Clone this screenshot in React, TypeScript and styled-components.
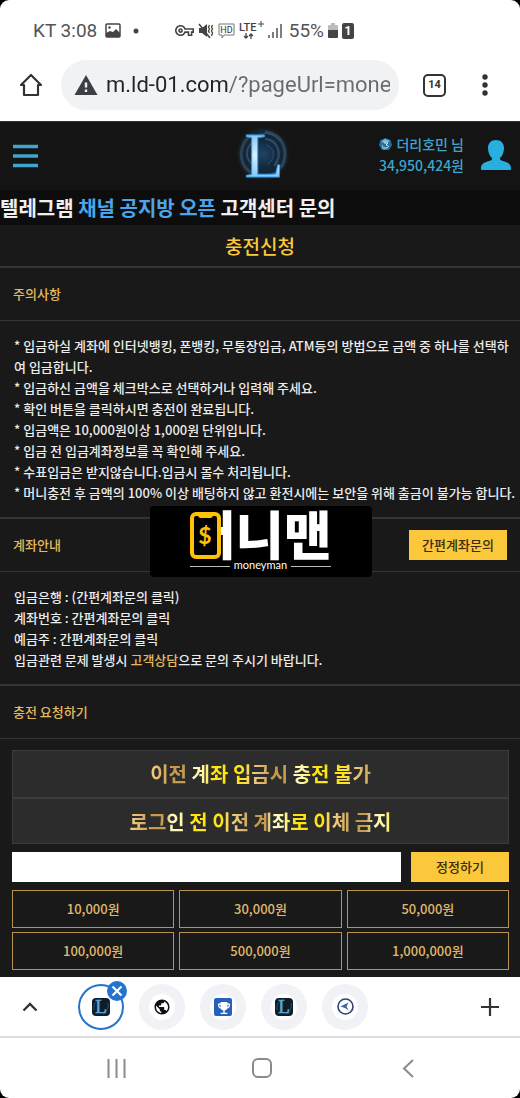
import React from "react";
import styled, { createGlobalStyle } from "styled-components";
import { MdPublic, MdOutlineVpnKey, MdEmojiEvents } from "react-icons/md";

const gold = "#e6b95e";
const yellow = "#fbc83c";
const cyan = "#3fa5cf";
const line = "#343434";
const korean = `"Noto Sans CJK KR", "Noto Sans", sans-serif`;

const GlobalStyle = createGlobalStyle`
  * { box-sizing: border-box; }
  html { background: #000; }
  body { margin: 0; background: #000; font-family: ${korean}; }
  button, input { font: inherit; color: inherit; margin: 0; padding: 0; border: 0; border-radius: 0; background: none; }
  button { cursor: pointer; }
  svg { display: block; flex: none; overflow: visible; }
`;

const Screen = styled.div`
  background: #fff;
  border-radius: 9px;
  overflow: hidden;
`;

/* ---------- phone and browser chrome ---------- */

const StatusBar = styled.div`
  display: flex;
  align-items: center;
  justify-content: space-between;
  height: 61px;
  padding: 0 166px 0 33px;
  font: 400 19px/24px Roboto, sans-serif;
  color: #555;
`;

const StatusGroup = styled.div<{ $gap: number }>`
  display: flex;
  align-items: center;
  gap: ${(p) => p.$gap}px;
`;

const BrowserBar = styled.div`
  display: flex;
  align-items: center;
  height: 61px;
  padding: 0 20px 12px 16px;
  border-bottom: 1px solid #333;
`;

const ChromeButton = styled.button`
  display: flex;
  align-items: center;
  justify-content: center;
  height: 30px;
  width: 30px;
  color: #333;
`;

const AddressPill = styled.label`
  display: flex;
  align-items: center;
  flex: 1;
  gap: 8px;
  min-width: 0;
  height: 50px;
  margin: 0 24px 0 15px;
  padding: 0 9px 0 13px;
  border-radius: 25px;
  background: #f1f2f4;
`;

const AddressInput = styled.input`
  flex: 1;
  min-width: 0;
  height: 32px;
  font: 400 22px/32px Roboto, sans-serif;
  color: transparent;
  background: linear-gradient(90deg, #222427 122px, #686c71 122px);
  background-clip: text;
  -webkit-background-clip: text;
  outline: none;
`;

const TabCount = styled.button`
  width: 23px;
  height: 23px;
  border: 2px solid #333;
  border-radius: 5px;
  font: 700 11px/18px Roboto, sans-serif;
  color: #333;
  margin-right: 24px;
`;

/* ---------- site ---------- */

const Site = styled.div`
  position: relative;
  background: #191919;
  color: #ececec;
`;

const SiteHeader = styled.header`
  display: grid;
  grid-template-columns: 1fr auto 1fr;
  align-items: center;
  height: 68px;
  padding: 0 9px 2px 13px;
  background: #141414;
`;

const MenuButton = styled.button`
  width: 25px;
  height: 25px;
  color: ${cyan};
`;

const Account = styled.div`
  display: flex;
  align-items: center;
  justify-content: flex-end;
  gap: 17px;
`;

const AccountText = styled.div`
  font-size: 14px;
  font-weight: 500;
  line-height: 21px;
  color: ${cyan};
  white-space: nowrap;
`;

const AccountName = styled.div`
  display: flex;
  align-items: center;
  justify-content: flex-end;
  gap: 4px;
`;

const Ticker = styled.div`
  height: 35px;
  background: #0d0d0d;
  color: #efefef;
  font-size: 20px;
  font-weight: 700;
  line-height: 36px;
  white-space: nowrap;
  overflow: hidden;
`;

const TickerLink = styled.a`
  color: #4ba5ea;
  text-decoration: none;
`;

const PageTitle = styled.h1`
  margin: 0;
  height: 43px;
  border-bottom: 2px solid ${line};
  color: ${yellow};
  font-size: 19px;
  font-weight: 500;
  line-height: 42px;
  text-align: center;
`;

const SectionBar = styled.div`
  display: flex;
  align-items: center;
  justify-content: space-between;
  height: 53px;
  padding: 0 13px;
  border-bottom: 1px solid ${line};
`;

const SectionTitle = styled.h2`
  margin: 0;
  color: ${gold};
  font-size: 13px;
  font-weight: 500;
  line-height: 20px;
`;

const SectionBody = styled.div`
  padding: 14px 4px 14px 14px;
  border-bottom: 2px solid ${line};
  font-size: 13px;
  font-weight: 500;
  line-height: 21px;
`;

const Line = styled.p`
  margin: 0;
  word-break: break-all;
`;

const TextLink = styled.a`
  color: ${gold};
  text-decoration: none;
`;

const GoldButton = styled.button`
  width: 98px;
  height: 30px;
  background: ${yellow};
  color: #3a2c10;
  font-size: 13px;
  font-weight: 500;
  line-height: 30px;
`;

const ChargeForm = styled.form`
  display: flex;
  flex-direction: column;
  gap: 8px;
  padding: 11px 11px 7px 12px;
`;

const Warnings = styled.div`
  border: 1px solid #3c3c3c;
  background: #2c2c2c;
`;

const Warning = styled.div`
  height: 46px;
  text-align: center;
  font-size: 20px;
  font-weight: 700;
  line-height: 46px;
  & + & {
    border-top: 2px solid #3c3c3c;
  }
`;

const Shimmer = styled.span`
  display: inline-block;
  line-height: 40px;
  color: transparent;
  background: repeating-linear-gradient(
    90deg,
    #f4d084 0px,
    #c79b4c 22px,
    #c79b4c 34px,
    #fffbc4 42px,
    #fff6a0 54px,
    #ffe414 62px,
    #ffe414 92px,
    #f4d084 101px
  );
  background-clip: text;
  -webkit-background-clip: text;
`;

const AmountRow = styled.div`
  display: flex;
  gap: 10px;
`;

const AmountInput = styled.input`
  flex: 1;
  min-width: 0;
  height: 30px;
  padding: 0 8px;
  background: #fff;
  color: #222;
  font-size: 13px;
`;

const AmountGrid = styled.div`
  display: grid;
  grid-template-columns: repeat(3, 1fr);
  gap: 4px 5px;
`;

const AmountButton = styled.button`
  height: 38px;
  border: 1px solid #b8924e;
  color: #e0b96c;
  font-size: 13px;
  font-weight: 500;
  line-height: 34px;
`;

const Watermark = styled.div`
  position: absolute;
  top: 384px;
  left: 50%;
  transform: translateX(-50%);
  margin-left: 1px;
  border-radius: 4px;
  background: #000;
`;

/* ---------- bottom ---------- */

const TabStrip = styled.nav`
  display: flex;
  align-items: center;
  justify-content: space-between;
  height: 61px;
  padding: 0 15px;
  border-bottom: 2px solid #dedfe1;
`;

const Tabs = styled.div`
  display: flex;
  gap: 15px;
  margin: 0 auto 0 33px;
`;

const Tab = styled.button<{ $active?: boolean }>`
  position: relative;
  display: flex;
  align-items: center;
  justify-content: center;
  width: 46px;
  height: 46px;
  border-radius: 50%;
  background: ${(p) => (p.$active ? "#fff" : "#f1f2f6")};
  border: ${(p) => (p.$active ? "2px solid #2474cf" : "0")};
`;

const TabInner = styled.span`
  display: flex;
  align-items: center;
  justify-content: center;
  width: 26px;
  height: 26px;
  border-radius: 50%;
  background: #fff;
`;

const CloseBadge = styled.span`
  position: absolute;
  top: -5px;
  right: -5px;
`;

const SystemNav = styled.nav`
  display: flex;
  align-items: center;
  justify-content: space-between;
  height: 60px;
  padding: 0 97px 0 101px;
`;

/* ---------- drawings ---------- */

const ImageIcon = () => (
  <svg width="16" height="15" viewBox="0 0 16 15">
    <rect x="1" y="1" width="14" height="13" rx="1" fill="none" stroke="#444" strokeWidth="1.5" />
    <path d="M1 12V10l4-2 3 1 3-3 4 4v4H1z" fill="#444" />
    <circle cx="4.500" cy="4.500" r="1.200" fill="#444" />
  </svg>
);

const KeyIcon = () => <MdOutlineVpnKey size={19} color="#444" />;

const MuteIcon = () => (
  <svg width="16" height="16" viewBox="0 0 16 16" fill="none" stroke="#444">
    <path d="M1 5h3l5-4v13L4 10H1z" fill="#444" stroke="none" />
    <path d="M1 1l11 14" strokeWidth="1.500" />
    <path d="M11.500 2l-1 2 1 2-1 2 1 2M14.500 2l-1 2 1 2-1 2 1 2-1 3" strokeWidth="1.300" />
  </svg>
);

const HdIcon = () => (
  <svg width="17" height="16" viewBox="0 0 17 16">
    <path d="M1 1h15v11H6l-2 3v-3H1z" fill="none" stroke="#777" />
    <text x="8.500" y="10" textAnchor="middle" fontFamily="Roboto, sans-serif" fontSize="9" fill="#333">HD</text>
  </svg>
);

const LteIcon = () => (
  <svg width="25" height="20" viewBox="0 0 25 20">
    <text x="0" y="10" fontFamily="Roboto, sans-serif" fontSize="11" fontWeight="500" fill="#444">LTE</text>
    <path d="M22 0v6M19 3h6" stroke="#444" />
    <path d="M7 12v5M5 15l2 2 2-2M12 18v-5M10 15l2-2 2 2" fill="none" stroke="#444" strokeWidth="1.300" />
  </svg>
);

const SignalIcon = () => (
  <svg width="17" height="14" viewBox="0 0 17 14">
    <path d="M1 11v3M5 8v6M9 4v10M13 0v14" stroke="#555" strokeWidth="1.500" />
  </svg>
);

const BatteryIcon = () => (
  <svg width="10" height="15" viewBox="0 0 10 15">
    <path d="M3 0h4v2h2q1 0 1 1v4H0V3q0-1 1-1h2z" fill="#bbb" />
    <path d="M0 7h10v7q0 1-1 1H1q-1 0-1-1z" fill="#444" />
  </svg>
);

const SimIcon = () => (
  <svg width="12" height="16" viewBox="0 0 12 16">
    <rect width="12" height="16" rx="2" fill="#444" />
    <text x="6" y="12" textAnchor="middle" fontFamily="Roboto, sans-serif" fontSize="12" fontWeight="700" fill="#fff">1</text>
  </svg>
);

const HomeIcon = () => (
  <svg width="24" height="24" viewBox="0 0 24 24">
    <path d="M12 2L2 12h3v10h14V12h3z" fill="none" stroke="#333" strokeWidth="2.200" strokeLinejoin="round" />
  </svg>
);

const AlertIcon = () => (
  <svg width="24" height="20" viewBox="0 0 24 20">
    <path d="M12 0l11.500 20H.5z" fill="#3b3e42" />
    <path d="M12 7.500v5M12 14.500v2.500" stroke="#f1f2f4" strokeWidth="2.400" />
  </svg>
);

const LogoIcon = () => (
  <svg width="52" height="60" viewBox="0 0 52 60">
    <defs>
      <radialGradient id="orb">
        <stop offset="0" stopColor="#1d4468" />
        <stop offset="0.550" stopColor="#12273a" />
        <stop offset="0.850" stopColor="#182632" />
        <stop offset="1" stopColor="#141414" />
      </radialGradient>
      <linearGradient id="ice" x1="0" x2="0" y1="0" y2="1">
        <stop offset="0" stopColor="#4aa8ee" />
        <stop offset="0.500" stopColor="#d4f2ff" />
        <stop offset="1" stopColor="#4ab2f4" />
      </linearGradient>
    </defs>
    <circle cx="27" cy="29" r="27" fill="url(#orb)" />
    <g fill="none" stroke="#4c7594" strokeLinecap="round">
      <path d="M16 10C2 19 2 38 14 47" strokeWidth="3" opacity=".35" />
      <path d="M17 17C9 23 9 34 17 40" strokeWidth="2" opacity=".45" />
      <path d="M30 7c17 2 23 20 16 34" strokeWidth="3" opacity=".4" />
      <path d="M30 14c13 2 16 16 9 26" strokeWidth="2.500" opacity=".45" />
      <path d="M31 20c9 4 8 14 1 19M44 16c-7-8-15-9-23-6M46 42c-9 9-20 10-29 5" opacity=".45" />
    </g>
    <text x="28" y="52" textAnchor="middle" fontFamily="Liberation Serif, serif" fontSize="64" fill="url(#ice)" stroke="#3d9be8" strokeWidth="1">L</text>
  </svg>
);

const LevelIcon = () => (
  <svg width="13" height="13" viewBox="0 0 13 13">
    <path d="M6.500 0l5 2 1.500 5-3 5H3L0 7l1.500-5z" fill="#276d96" />
    <path d="M2 4l4-3 5 2-4 2zM3 6v4l3 2" fill="#7cc1df" />
    <path d="M5 5h4L7 7c3 0 3 3 0 3H5" fill="none" stroke="#cdeeff" />
  </svg>
);

const PersonIcon = () => (
  <svg width="30" height="30" viewBox="0 0 30 30">
    <path
      d="M15 0c5 0 8 3.500 8 8 0 4-1.500 8-4 10v1c0 1 1 1.500 3 2 5 1.500 8 3 8 7v1q0 1-1 1H1q-1 0-1-1v-1c0-4 3-5.500 8-7 2-.5 3-1 3-2v-1C8.500 16 7 12 7 8c0-4.500 3-8 8-8z"
      fill="#29aee0"
    />
  </svg>
);

const MoneymanLogo = () => (
  <svg width="222" height="71" viewBox="0 0 222 71" role="img" aria-label="moneyman">
    <text x="38" y="49" fontFamily="Noto Sans CJK KR, sans-serif" fontSize="52" fontWeight="900" fill="#fff">머니맨</text>
    <rect x="36" y="4" width="34" height="52" fill="#000" />
    <path d="M70 26h6" stroke="#fff" strokeWidth="6" />
    <rect x="42" y="8" width="27" height="43" rx="4" fill="#000" stroke="#fdc106" strokeWidth="4" />
    <path d="M48 8h15v1q0 3-3 3h-9q-3 0-3-3z" fill="#fdc106" />
    <text x="55" y="38" textAnchor="middle" fontFamily="Lato, sans-serif" fontSize="23" fontWeight="700" fill="#fdc106">$</text>
    <path d="M40 60.500h40M141 60.500h40" stroke="#bbb" />
    <text x="110.500" y="63" textAnchor="middle" fontFamily="Lato, sans-serif" fontSize="11" fill="#fff">moneyman</text>
  </svg>
);

const LFavicon = () => (
  <svg width="18" height="18" viewBox="0 0 18 18">
    <rect width="18" height="18" rx="4" fill="#101d29" />
    <path d="M2 12C1 5 5 2 9 2M16 5c1 5-1 9-5 11" fill="none" stroke="#295977" />
    <text x="9" y="15" textAnchor="middle" fontFamily="Liberation Serif, serif" fontSize="19" fill="#58a9d8" stroke="#58a9d8" strokeWidth=".5">L</text>
  </svg>
);

const TrophyFavicon = () => (
  <svg width="18" height="18" viewBox="0 0 18 18">
    <rect width="18" height="18" rx="2" fill="#2862b8" />
    <MdEmojiEvents x="2" y="2" width="14" height="14" color="#fff" />
  </svg>
);

const PlaneFavicon = () => (
  <svg width="17" height="17" viewBox="0 0 17 17">
    <circle cx="8.500" cy="8.500" r="7.500" fill="#fff" stroke="#2b4374" strokeWidth="1.600" />
    <path d="M3.500 8.500l8-4-2 4 2 4-3.500-2.500z" fill="#3563a6" />
  </svg>
);

const notices = [
  "* 입금하실 계좌에 인터넷뱅킹, 폰뱅킹, 무통장입금, ATM등의 방법으로 금액 중 하나를 선택하여 입금합니다.",
  "* 입금하신 금액을 체크박스로 선택하거나 입력해 주세요.",
  "* 확인 버튼을 클릭하시면 충전이 완료됩니다.",
  "* 입금액은 10,000원이상 1,000원 단위입니다.",
  "* 입금 전 입금계좌정보를 꼭 확인해 주세요.",
  "* 수표입금은 받지않습니다.입금시 몰수 처리됩니다.",
  "* 머니충전 후 금액의 100% 이상 배팅하지 않고 환전시에는 보안을 위해 출금이 불가능 합니다.",
];

const amounts = ["10,000원", "30,000원", "50,000원", "100,000원", "500,000원", "1,000,000원"];

export default function App() {
  return (
    <>
      <GlobalStyle />
      <Screen>
        <StatusBar>
          <StatusGroup $gap={8}>
            <span>KT 3:08</span>
            <ImageIcon />
            <svg width="16" height="6" viewBox="0 0 16 6"><circle cx="7" cy="3" r="2.500" fill="#444" /></svg>
          </StatusGroup>
          <StatusGroup $gap={4}>
            <KeyIcon />
            <MuteIcon />
            <HdIcon />
            <LteIcon />
            <SignalIcon />
            <span>55%</span>
            <BatteryIcon />
            <SimIcon />
          </StatusGroup>
        </StatusBar>

        <BrowserBar>
          <ChromeButton aria-label="Home"><HomeIcon /></ChromeButton>
          <AddressPill>
            <AlertIcon />
            <AddressInput aria-label="Address" defaultValue="m.ld-01.com/?pageUrl=money" />
          </AddressPill>
          <TabCount aria-label="Tabs">14</TabCount>
          <ChromeButton aria-label="Menu">
            <svg width="6" height="22" viewBox="0 0 6 22" fill="#333">
              <circle cx="3" cy="3" r="2.700" /><circle cx="3" cy="11" r="2.700" /><circle cx="3" cy="19" r="2.700" />
            </svg>
          </ChromeButton>
        </BrowserBar>

        <Site>
          <SiteHeader>
            <MenuButton aria-label="메뉴">
              <svg width="25" height="25" viewBox="0 0 25 25">
                <path d="M0 3.500h25M0 13h25M0 22.500h25" stroke="currentColor" strokeWidth="3.500" />
              </svg>
            </MenuButton>
            <LogoIcon />
            <Account>
              <AccountText>
                <AccountName><LevelIcon />더리호민 님</AccountName>
                <div>34,950,424원</div>
              </AccountText>
              <PersonIcon />
            </Account>
          </SiteHeader>

          <Ticker>텔레그램 <TickerLink href="#channel">채널 공지방 오픈</TickerLink> 고객센터 문의</Ticker>
          <PageTitle>충전신청</PageTitle>

          <SectionBar><SectionTitle>주의사항</SectionTitle></SectionBar>
          <SectionBody>
            {notices.map((text) => <Line key={text}>{text}</Line>)}
          </SectionBody>

          <SectionBar>
            <SectionTitle>계좌안내</SectionTitle>
            <GoldButton type="button">간편계좌문의</GoldButton>
          </SectionBar>
          <SectionBody>
            <Line>입금은행 : (간편계좌문의 클릭)</Line>
            <Line>계좌번호 : 간편계좌문의 클릭</Line>
            <Line>예금주 : 간편계좌문의 클릭</Line>
            <Line>입금관련 문제 발생시 <TextLink href="#support">고객상담</TextLink>으로 문의 주시기 바랍니다.</Line>
          </SectionBody>

          <SectionBar><SectionTitle>충전 요청하기</SectionTitle></SectionBar>
          <ChargeForm>
            <Warnings>
              <Warning><Shimmer>이전 계좌 입금시 충전 불가</Shimmer></Warning>
              <Warning><Shimmer>로그인 전 이전 계좌로 이체 금지</Shimmer></Warning>
            </Warnings>
            <AmountRow>
              <AmountInput type="text" aria-label="충전 금액" />
              <GoldButton type="reset">정정하기</GoldButton>
            </AmountRow>
            <AmountGrid>
              {amounts.map((a) => <AmountButton type="button" key={a}>{a}</AmountButton>)}
            </AmountGrid>
          </ChargeForm>

          <Watermark><MoneymanLogo /></Watermark>
        </Site>

        <TabStrip>
          <ChromeButton aria-label="Expand">
            <svg width="16" height="10" viewBox="0 0 16 10"><path d="M1.500 8.500L8 2l6.500 6.500" fill="none" stroke="#333" strokeWidth="2.300" /></svg>
          </ChromeButton>
          <Tabs>
            <Tab $active aria-label="Current tab">
              <LFavicon />
              <CloseBadge>
                <svg width="20" height="20" viewBox="0 0 20 20">
                  <circle cx="10" cy="10" r="10" fill="#2474cf" />
                  <path d="M5.500 5.500l9 9M14.500 5.500l-9 9" stroke="#fff" strokeWidth="2.200" />
                </svg>
              </CloseBadge>
            </Tab>
            <Tab aria-label="Tab 2"><TabInner><MdPublic size={18} color="#111" /></TabInner></Tab>
            <Tab aria-label="Tab 3"><TabInner><TrophyFavicon /></TabInner></Tab>
            <Tab aria-label="Tab 4"><TabInner><LFavicon /></TabInner></Tab>
            <Tab aria-label="Tab 5"><TabInner><PlaneFavicon /></TabInner></Tab>
          </Tabs>
          <ChromeButton aria-label="New tab">
            <svg width="18" height="18" viewBox="0 0 18 18"><path d="M9 0v18M0 9h18" stroke="#333" strokeWidth="2.200" /></svg>
          </ChromeButton>
        </TabStrip>

        <SystemNav>
          <ChromeButton aria-label="Recents">
            <svg width="19" height="19" viewBox="0 0 19 19"><path d="M1.500 0v19M9.500 0v19M17.500 0v19" stroke="#8a8a8a" strokeWidth="2" /></svg>
          </ChromeButton>
          <ChromeButton aria-label="Home screen">
            <svg width="20" height="20" viewBox="0 0 20 20"><rect x="1" y="1" width="18" height="18" rx="5" fill="none" stroke="#8a8a8a" strokeWidth="2" /></svg>
          </ChromeButton>
          <ChromeButton aria-label="Back">
            <svg width="12" height="19" viewBox="0 0 12 19"><path d="M11 1L2 9.500l9 8.500" fill="none" stroke="#8a8a8a" strokeWidth="2" /></svg>
          </ChromeButton>
        </SystemNav>
      </Screen>
    </>
  );
}
